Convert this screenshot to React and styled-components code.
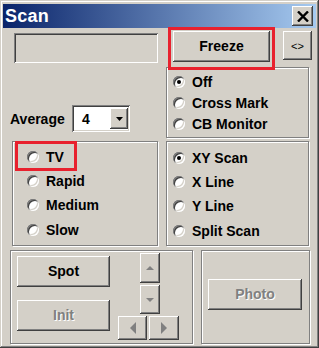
import React from 'react';
import styled, { createGlobalStyle, css } from 'styled-components';

const GlobalStyle = createGlobalStyle`
  body {
    margin: 0;
    background: #d4d0c8;
    font-family: "Liberation Sans", Arial, sans-serif;
  }
`;

const raised = css`
  box-shadow: inset -1px -1px #404040, inset 1px 1px #ffffff,
    inset -2px -2px #808080, inset 2px 2px #d4d0c8;
`;

const sunken = css`
  box-shadow: inset 1px 1px #808080, inset -1px -1px #ffffff,
    inset 2px 2px #404040, inset -2px -2px #d4d0c8;
`;

const ScanWindow = () => (
  <Window>
    <TitleBar>
      <Title>Scan</Title>
      <CloseButton>
        <svg width="12" height="11" viewBox="0 0 12 11">
          <path d="M1 0.5 L11 10.5 M11 0.5 L1 10.5" stroke="#000" strokeWidth="2.4" />
        </svg>
      </CloseButton>
    </TitleBar>

    <TopRow>
      <StatusField />
      <Highlight $top={-4} $right={-5} $bottom={-8} $left={-5} $ml={15}>
        <Button $w={97} $h={31}>Freeze</Button>
      </Highlight>
      <SmallButton>&lt;&gt;</SmallButton>
    </TopRow>

    <MidSection>
      <LeftColumn>
        <AverageRow>
          <Label>Average</Label>
          <Combo>
            <ComboValue>4</ComboValue>
            <ComboArrow>
              <svg width="7" height="4" viewBox="0 0 7 4">
                <path d="M0 0 H7 L3.5 4 Z" fill="#000" />
              </svg>
            </ComboArrow>
          </Combo>
        </AverageRow>
        <Group $h={105} $pt={3} $pl={14}>
          <Highlight $top={-4} $right={-13} $bottom={-2} $left={-12} $ml={0}>
            <Radio $h={24} label="TV" />
          </Highlight>
          <Radio $h={24} label="Rapid" />
          <Radio $h={24} label="Medium" />
          <Radio $h={25} label="Slow" />
        </Group>
      </LeftColumn>

      <RightColumn>
        <Group $h={71} $pt={3} $pl={6}>
          <Radio $h={21} label="Off" checked />
          <Radio $h={21} label="Cross Mark" />
          <Radio $h={21} label="CB Monitor" />
        </Group>
        <Group $h={105} $pt={4} $pl={6}>
          <Radio $h={24} label="XY Scan" checked />
          <Radio $h={24} label="X Line" />
          <Radio $h={24} label="Y Line" />
          <Radio $h={25} label="Split Scan" />
        </Group>
      </RightColumn>
    </MidSection>

    <BottomSection>
      <Group $w={183} $h={94} $pt={0} $pl={0} $row>
        <ActionColumn>
          <Button $w={93} $h={31}>Spot</Button>
          <Button $w={93} $h={31} disabled>Init</Button>
        </ActionColumn>
        <ArrowPad>
          <ArrowButton $w={20} $h={30} $ml={22}>
            <Tri $dir="up" />
          </ArrowButton>
          <ArrowButton $w={20} $h={29} $ml={22}>
            <Tri $dir="down" />
          </ArrowButton>
          <ArrowRow>
            <ArrowButton $w={29} $h={24}>
              <Tri $dir="left" />
            </ArrowButton>
            <ArrowButton $w={30} $h={24}>
              <Tri $dir="right" />
            </ArrowButton>
          </ArrowRow>
        </ArrowPad>
      </Group>
      <Group $w={109} $h={94} $pt={28} $pl={6}>
        <Button $w={94} $h={31} disabled>Photo</Button>
      </Group>
    </BottomSection>
  </Window>
);

const Radio = ({ label, checked, $h }) => (
  <RadioRow $h={$h}>
    <RadioCircle>{checked && <RadioDot />}</RadioCircle>
    <RadioLabel>{label}</RadioLabel>
  </RadioRow>
);

export default function App() {
  return (
    <>
      <GlobalStyle />
      <ScanWindow />
    </>
  );
}

// Styled Components

const Window = styled.div`
  width: 319px;
  height: 348px;
  box-sizing: border-box;
  padding: 4px 3px 4px 3px;
  background: #d4d0c8;
  box-shadow: inset -1px -1px #404040, inset 1px 1px #d4d0c8,
    inset -2px -2px #808080, inset 2px 2px #ffffff;
  font-family: "Liberation Sans", Arial, sans-serif;
  font-weight: bold;
  font-size: 14px;
  color: #000;
`;

const TitleBar = styled.div`
  height: 24px;
  display: flex;
  align-items: center;
  justify-content: space-between;
  padding: 0 3px 0 2px;
  background: linear-gradient(to right, #0a246a, #a6caf0);
`;

const Title = styled.span`
  color: #fff;
  font-size: 18px;
  font-weight: bold;
  letter-spacing: 0.2px;
`;

const CloseButton = styled.div`
  width: 21px;
  height: 20px;
  background: #d4d0c8;
  display: flex;
  align-items: center;
  justify-content: center;
  ${raised};
`;

const TopRow = styled.div`
  display: flex;
  align-items: flex-start;
  margin-top: 3px;
  height: 32px;
`;

const StatusField = styled.div`
  width: 144px;
  height: 30px;
  margin: 2px 0 0 11px;
  background: #d4d0c8;
  ${sunken};
`;

const Highlight = styled.div`
  position: relative;
  align-self: flex-start;
  margin-left: ${(p) => p.$ml}px;
  &::after {
    content: '';
    position: absolute;
    top: ${(p) => p.$top}px;
    right: ${(p) => p.$right}px;
    bottom: ${(p) => p.$bottom}px;
    left: ${(p) => p.$left}px;
    border: 3px solid #e8212e;
    pointer-events: none;
  }
`;

const Button = styled.div`
  width: ${(p) => p.$w}px;
  height: ${(p) => p.$h}px;
  display: flex;
  align-items: center;
  justify-content: center;
  background: #d4d0c8;
  font-size: 14px;
  font-weight: bold;
  box-sizing: border-box;
  padding-bottom: 1px;
  color: ${(p) => (p.disabled ? '#808080' : '#000')};
  text-shadow: ${(p) => (p.disabled ? '1px 1px #ffffff' : 'none')};
  ${raised};
`;

const SmallButton = styled.div`
  width: 29px;
  height: 29px;
  margin-left: 13px;
  display: flex;
  align-items: center;
  justify-content: center;
  background: #d4d0c8;
  font-size: 11px;
  font-weight: normal;
  ${raised};
`;

const MidSection = styled.div`
  display: flex;
  height: 183px;
`;

const LeftColumn = styled.div`
  width: 148px;
  margin-left: 7px;
  display: flex;
  flex-direction: column;
  justify-content: flex-end;
  & > div:last-child {
    margin-left: 2px;
  }
`;

const AverageRow = styled.div`
  display: flex;
  align-items: center;
  height: 27px;
  margin-bottom: 9px;
`;

const Label = styled.span`
  width: 62px;
  font-size: 14px;
`;

const Combo = styled.div`
  width: 58px;
  height: 27px;
  box-sizing: border-box;
  background: #fff;
  display: flex;
  align-items: center;
  justify-content: space-between;
  padding: 2px 2px 2px 10px;
  ${sunken};
`;

const ComboValue = styled.span`
  font-size: 14px;
`;

const ComboArrow = styled.div`
  width: 18px;
  height: 21px;
  display: flex;
  align-items: center;
  justify-content: center;
  background: #d4d0c8;
  ${raised};
`;

const RightColumn = styled.div`
  width: 143px;
  margin-left: 8px;
  display: flex;
  flex-direction: column;
  gap: 3px;
  padding-top: 4px;
`;

const Group = styled.div`
  width: ${(p) => (p.$w ? `${p.$w}px` : 'auto')};
  height: ${(p) => p.$h}px;
  box-sizing: border-box;
  border: 1px solid #808080;
  box-shadow: inset 1px 1px #ffffff, 1px 1px #ffffff;
  padding-top: ${(p) => p.$pt}px;
  padding-left: ${(p) => p.$pl}px;
  display: flex;
  flex-direction: ${(p) => (p.$row ? 'row' : 'column')};
`;

const RadioRow = styled.div`
  height: ${(p) => p.$h}px;
  display: flex;
  align-items: center;
  gap: 7px;
`;

const RadioCircle = styled.span`
  width: 12px;
  height: 12px;
  border-radius: 50%;
  background: #fff;
  box-shadow: inset 1px 1px #808080, inset -1px -1px #ffffff,
    inset 2px 2px #404040, inset -2px -2px #d4d0c8;
  display: flex;
  align-items: center;
  justify-content: center;
  flex-shrink: 0;
`;

const RadioDot = styled.span`
  width: 4px;
  height: 4px;
  border-radius: 50%;
  background: #000;
`;

const RadioLabel = styled.span`
  font-size: 14px;
  white-space: nowrap;
`;

const BottomSection = styled.div`
  display: flex;
  gap: 8px;
  margin: 4px 0 0 7px;
`;

const ActionColumn = styled.div`
  display: flex;
  flex-direction: column;
  gap: 13px;
  margin: 5px 0 0 6px;
`;

const ArrowPad = styled.div`
  display: flex;
  flex-direction: column;
  gap: 2px;
  margin: 2px 0 0 8px;
`;

const ArrowRow = styled.div`
  display: flex;
  gap: 2px;
`;

const ArrowButton = styled.div`
  width: ${(p) => p.$w}px;
  height: ${(p) => p.$h}px;
  margin-left: ${(p) => p.$ml || 0}px;
  display: flex;
  align-items: center;
  justify-content: center;
  background: #d4d0c8;
  ${raised};
`;

const Tri = styled.span`
  width: 0;
  height: 0;
  ${(p) =>
    p.$dir === 'up' &&
    css`
      border-left: 4px solid transparent;
      border-right: 4px solid transparent;
      border-bottom: 4px solid #808080;
    `}
  ${(p) =>
    p.$dir === 'down' &&
    css`
      border-left: 4px solid transparent;
      border-right: 4px solid transparent;
      border-top: 4px solid #808080;
    `}
  ${(p) =>
    p.$dir === 'left' &&
    css`
      border-top: 6px solid transparent;
      border-bottom: 6px solid transparent;
      border-right: 6px solid #808080;
    `}
  ${(p) =>
    p.$dir === 'right' &&
    css`
      border-top: 6px solid transparent;
      border-bottom: 6px solid transparent;
      border-left: 6px solid #808080;
    `}
`;
